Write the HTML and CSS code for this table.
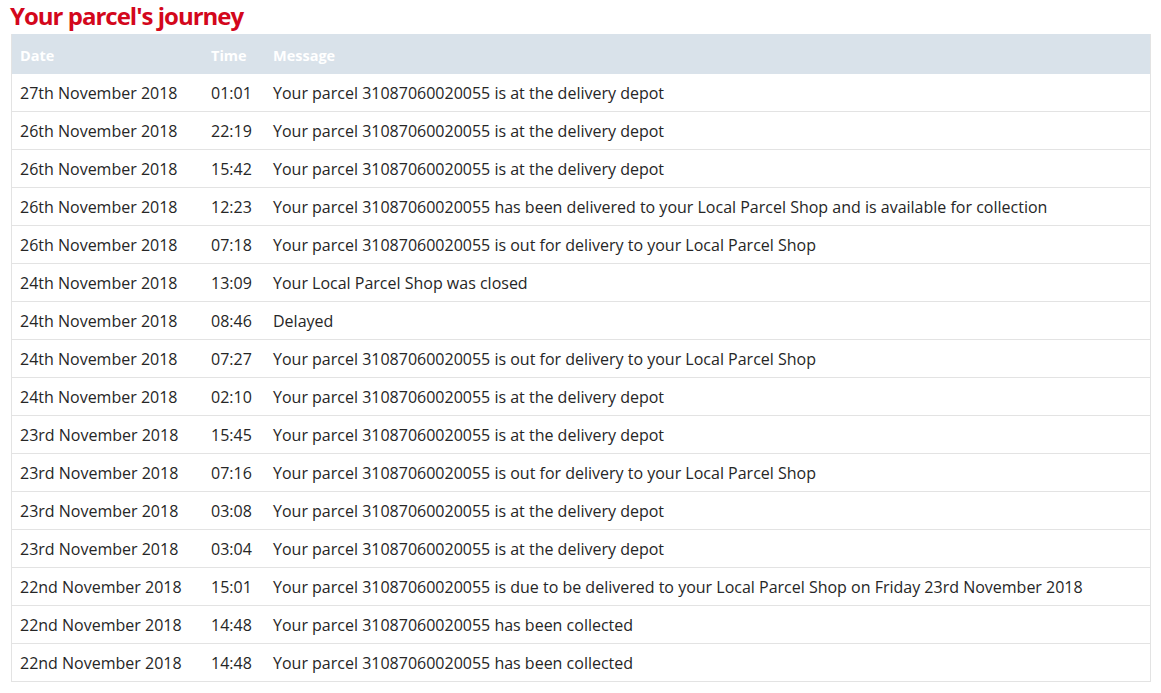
FILE: index.html
```html
<!DOCTYPE html>
<html lang="en">
<head>
    <meta charset="UTF-8">
    <title>Your parcel's journey</title>
    <link rel="stylesheet" href="styles.css">
</head>
<body>

    <!-- Parcel journey -->
    <section class="journey">
        <h2 class="journey-title">Your parcel's journey</h2>
        <table class="journey-table">
            <thead>
                <tr>
                    <th class="col-date">Date</th>
                    <th class="col-time">Time</th>
                    <th>Message</th>
                </tr>
            </thead>
            <tbody>
                <tr><td>27th November 2018</td><td>01:01</td><td>Your parcel 31087060020055 is at the delivery depot</td></tr>
                <tr><td>26th November 2018</td><td>22:19</td><td>Your parcel 31087060020055 is at the delivery depot</td></tr>
                <tr><td>26th November 2018</td><td>15:42</td><td>Your parcel 31087060020055 is at the delivery depot</td></tr>
                <tr><td>26th November 2018</td><td>12:23</td><td>Your parcel 31087060020055 has been delivered to your Local Parcel Shop and is available for collection</td></tr>
                <tr><td>26th November 2018</td><td>07:18</td><td>Your parcel 31087060020055 is out for delivery to your Local Parcel Shop</td></tr>
                <tr><td>24th November 2018</td><td>13:09</td><td>Your Local Parcel Shop was closed</td></tr>
                <tr><td>24th November 2018</td><td>08:46</td><td>Delayed</td></tr>
                <tr><td>24th November 2018</td><td>07:27</td><td>Your parcel 31087060020055 is out for delivery to your Local Parcel Shop</td></tr>
                <tr><td>24th November 2018</td><td>02:10</td><td>Your parcel 31087060020055 is at the delivery depot</td></tr>
                <tr><td>23rd November 2018</td><td>15:45</td><td>Your parcel 31087060020055 is at the delivery depot</td></tr>
                <tr><td>23rd November 2018</td><td>07:16</td><td>Your parcel 31087060020055 is out for delivery to your Local Parcel Shop</td></tr>
                <tr><td>23rd November 2018</td><td>03:08</td><td>Your parcel 31087060020055 is at the delivery depot</td></tr>
                <tr><td>23rd November 2018</td><td>03:04</td><td>Your parcel 31087060020055 is at the delivery depot</td></tr>
                <tr><td>22nd November 2018</td><td>15:01</td><td>Your parcel 31087060020055 is due to be delivered to your Local Parcel Shop on Friday 23rd November 2018</td></tr>
                <tr><td>22nd November 2018</td><td>14:48</td><td>Your parcel 31087060020055 has been collected</td></tr>
                <tr><td>22nd November 2018</td><td>14:48</td><td>Your parcel 31087060020055 has been collected</td></tr>
            </tbody>
        </table>
    </section>

</body>
</html>
```

FILE: styles.css
```css
body {
    margin: 0;
    background: #fff;
    font-family: "Open Sans", sans-serif;
    color: #262626;
}

/* Journey section */
.journey {
    padding: 0 10px 0 11px;
}

.journey-title {
    margin: 0 0 0 -1px;
    padding-top: 2px;
    height: 32px;
    line-height: 28px;
    font-size: 24px;
    font-weight: 700;
    letter-spacing: -1px;
    color: #d3071c;
}

/* Table */
.journey-table {
    width: 1140px;
    border-collapse: collapse;
    font-size: 16px;
    border: 1px solid #e3e3e3;
    border-top: none;
}

.journey-table th {
    background: #d9e2ea;
    color: #fff;
    font-weight: 700;
    text-align: left;
    height: 38px;
    padding: 2px 8px 0 8px;
    font-size: 14.5px;
}

.journey-table td {
    height: 37px;
    padding: 0 8px;
    border-bottom: 1px solid #e3e3e3;
    white-space: nowrap;
}

.journey-table tr:last-child td {
    border-bottom: none;
}

.col-date {
    width: 175px;
}

.col-time {
    width: 46px;
}
```
